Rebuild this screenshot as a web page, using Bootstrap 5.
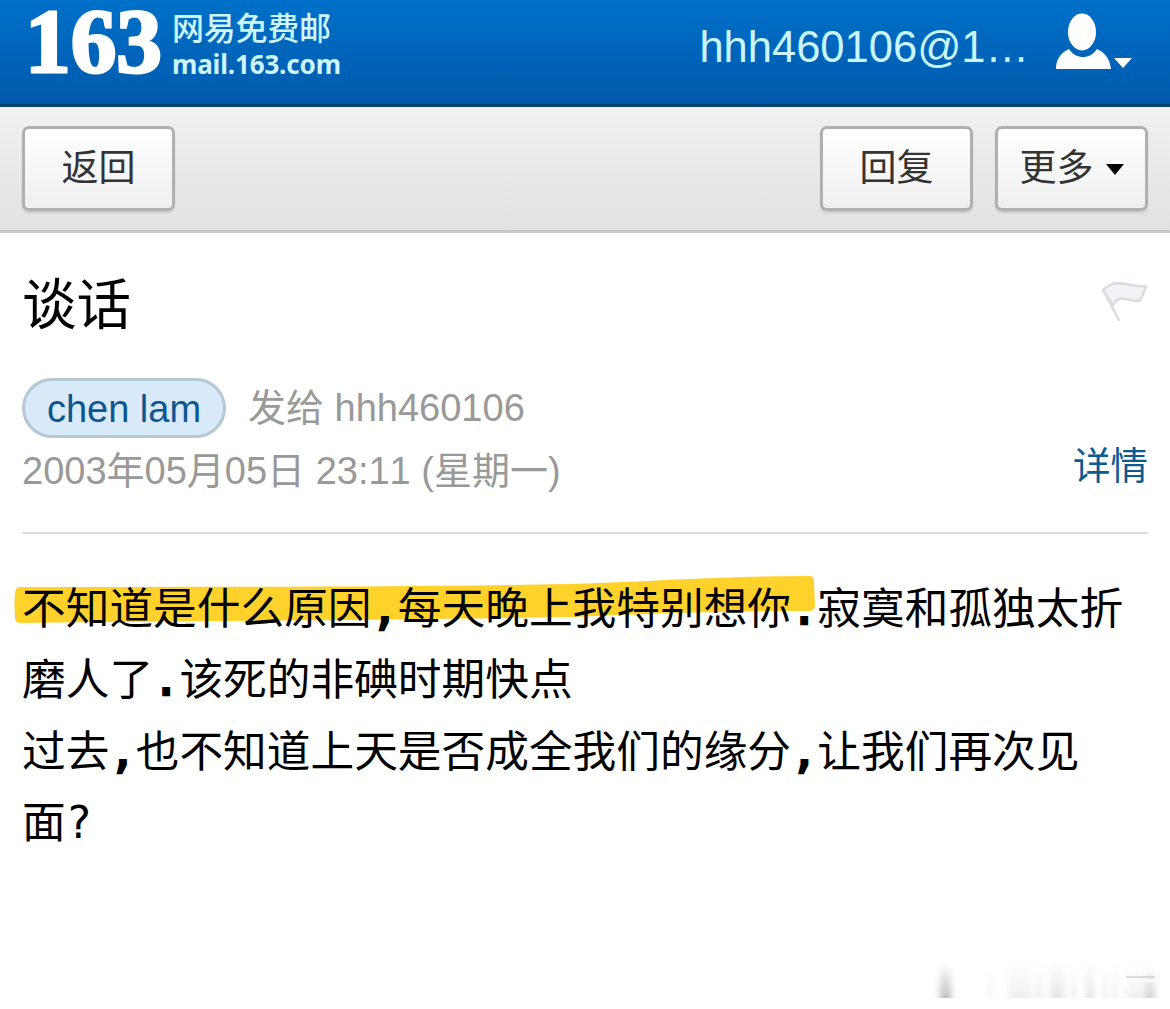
<!DOCTYPE html>
<html lang="zh-CN">
<head>
  <meta charset="UTF-8">
  <meta name="viewport" content="width=device-width, initial-scale=1">
  <title>163 网易免费邮</title>
  <link href="https://cdn.jsdelivr.net/npm/bootstrap@5.3.0/dist/css/bootstrap.min.css" rel="stylesheet">
  <style>
    body {
      font-family: "Liberation Sans", "Noto Sans CJK SC", sans-serif;
      font-kerning: none;
      height: 1009px;
      overflow: hidden;
    }

    .mail-header {
      height: 107px;
      background: linear-gradient(#0070c9, #005aac);
      border-bottom: 3px solid #0c426f;
    }

    .brand-logo {
      overflow: visible;
    }

    .account-name {
      font-size: 43.5px;
      line-height: 50px;
      color: #c9f6ff;
      margin-top: 22px;
      margin-right: 27px;
    }

    .user-icon {
      margin-top: 10px;
      margin-right: 37px;
    }

    .mail-toolbar {
      height: 126px;
      padding: 19px 22px 0;
      gap: 22px;
      background: linear-gradient(#f1f1f1, #e2e2e2);
      border-bottom: 3px solid #c9c9cb;
    }

    .btn-mail {
      --bs-btn-color: #333;
      --bs-btn-font-size: 37px;
      --bs-btn-line-height: 1;
      --bs-btn-padding-x: 0;
      --bs-btn-padding-y: 0;
      width: 153px;
      height: 85px;
      border: 3px solid #b0b0b0;
      border-radius: 7px;
      background: linear-gradient(#fff, #efefef);
      box-shadow: 0 2px 2px rgba(0, 0, 0, .12);
    }

    .more-caret {
      margin-left: 12px;
      margin-top: 2px;
    }

    .mail-main {
      padding: 0 22px;
    }

    .subject {
      font-size: 54.5px;
      line-height: 70px;
      margin: 38px 0 0;
    }

    .flag-icon {
      margin-top: 46px;
    }

    .mail-meta {
      font-size: 38px;
      line-height: 60px;
      color: #999;
      margin-top: 37px;
      height: 156px;
      border-bottom: 2px solid #ddd;
    }

    .sender {
      width: 204px;
      height: 60px;
      line-height: 56px;
      color: #0c5790;
      background: #d8eafa;
      border: 3px solid #b4c8d6;
      margin-right: 22px;
    }

    .mail-date {
      line-height: 60px;
      margin-top: 3px;
    }

    .detail-link {
      font-size: 37.5px;
      color: #0b5a92;
      margin-top: 58px;
    }

    .mail-text {
      font-family: "DejaVu Sans Mono", "Noto Sans CJK SC", monospace;
      font-size: 43.7px;
      line-height: 71.3px;
      color: #000;
      margin-top: 39px;
    }

    .punct {
      -webkit-text-stroke: 2.5px #000;
    }

    .marker-stroke {
      left: -10px;
      top: 0;
      z-index: -1;
    }

    .foot-smudge {
      margin-right: 8px;
      margin-bottom: 6px;
    }
  </style>
</head>
<body class="bg-white d-flex flex-column">

  <!-- Header -->
  <header class="mail-header d-flex justify-content-between align-items-start flex-shrink-0">
    <svg class="brand-logo" width="370" height="104" viewBox="0 0 370 104" fill="#fff">
      <text x="25" y="72" font-family="Liberation Serif" font-weight="700" font-size="92" textLength="137" lengthAdjust="spacingAndGlyphs" stroke="#fff" stroke-width="3">163</text>
      <text x="172" y="40" font-family="Noto Sans CJK SC" font-weight="500" font-size="32" textLength="159" fill="#cdf5ff">网易免费邮</text>
      <text x="172" y="73.500" font-family="Noto Sans" font-weight="700" font-size="26" textLength="169" fill="#cdf5ff">mail.163.com</text>
    </svg>
    <div class="d-flex align-items-start">
      <span class="account-name">hhh460106@1…</span>
      <svg class="user-icon" width="77" height="64" viewBox="0 0 77 64">
        <path fill="#fff" d="M0 59C0 50 4 43 13 39C17 45 22 47 27 47C32 47 37 45 41 39C50 43 54 50 55 59Z"/>
        <ellipse cx="26" cy="22" rx="14" ry="18.500" fill="#fff"/>
        <path fill="#fff" d="M58 48H76L67 58Z"/>
      </svg>
    </div>
  </header>

  <!-- Toolbar -->
  <nav class="mail-toolbar d-flex align-items-start flex-shrink-0">
    <button type="button" class="btn btn-mail">返回</button>
    <button type="button" class="btn btn-mail ms-auto">回复</button>
    <button type="button" class="btn btn-mail d-flex align-items-center justify-content-center" id="moreBtn">
      更多
      <svg class="more-caret" width="18" height="12" viewBox="0 0 18 12"><path d="M0 0H18L9 11Z"/></svg>
    </button>
  </nav>

  <!-- Message -->
  <main class="mail-main">
    <div class="d-flex justify-content-between align-items-start">
      <h1 class="subject fw-normal text-black">谈话</h1>
      <svg class="flag-icon" width="48" height="46" viewBox="0 0 48 46" fill="#f1f3f6" stroke="#dadcdf" stroke-width="2.500" stroke-linejoin="round" stroke-linecap="round">
        <path d="M3 11C18 -3 26 9 46 7C44 13 43 18 39 22C29 23 20 14 13 26Z"/>
        <path d="M3 11L19 41" fill="none"/>
      </svg>
    </div>

    <div class="mail-meta d-flex justify-content-between align-items-start">
      <div>
        <div class="d-flex">
          <span class="sender rounded-pill text-center">chen lam</span>
          <span>发给 hhh460106</span>
        </div>
        <div class="mail-date">2003年05月05日 23:11 (星期一)</div>
      </div>
      <a href="#" class="detail-link text-decoration-none">详情</a>
    </div>

    <div class="mail-text position-relative z-0">
      <!-- Hand drawn marker behind the first sentence -->
      <svg class="marker-stroke position-absolute" width="806" height="60" viewBox="0 0 806 60">
        <path fill="#ffd22b" d="M8 14C200 14 390 14 560 11C650 8 720 3 797 3Q802 3 802 8L803 33Q803 38 797 38C720 38 650 40 560 44C390 47 200 48 9 50Q3 50 3 45Q2 28 3 19Q4 14 8 14Z"/>
      </svg>
      不知道是什么原因<span class="punct">,</span>每天晚上我特别想你<span class="punct">.</span>寂寞和孤独太折<br>磨人了<span class="punct">.</span>该死的非碘时期快点<br>过去<span class="punct">,</span>也不知道上天是否成全我们的缘分<span class="punct">,</span>让我们再次见<br>面?
    </div>
  </main>

  <!-- Faded strip in the corner -->
  <svg class="foot-smudge mt-auto ms-auto flex-shrink-0" width="232" height="46" viewBox="0 0 232 46">
    <defs>
      <linearGradient id="fade" x1="0" y1="0" x2="0" y2="1">
        <stop offset="0" stop-color="#999" stop-opacity="0"/>
        <stop offset="1" stop-color="#999"/>
      </linearGradient>
      <filter id="soft" x="-10%" y="-10%" width="120%" height="120%"><feGaussianBlur stdDeviation="3 0.300"/></filter>
    </defs>
    <g fill="url(#fade)" filter="url(#soft)">
      <rect x="10" y="6" width="11" height="35" opacity=".65"/>
      <rect x="57" y="12" width="6" height="29" opacity=".1"/>
      <rect x="78" y="8" width="24" height="33" opacity=".15"/>
      <rect x="105" y="8" width="8" height="33" opacity=".14"/>
      <rect x="120" y="6" width="14" height="35" opacity=".26"/>
      <rect x="140" y="8" width="6" height="33" opacity=".15"/>
      <rect x="156" y="6" width="8" height="35" opacity=".28"/>
      <rect x="172" y="8" width="5" height="33" opacity=".15"/>
      <rect x="182" y="8" width="6" height="33" opacity=".15"/>
      <rect x="196" y="8" width="25" height="33" opacity=".14"/>
      <rect x="216" y="10" width="9" height="31" opacity=".4"/>
    </g>
    <path d="M196 19H225V21H196Z" fill="#bbb" opacity=".5"/>
    <path d="M210 14H228V16H210ZM180 23H229V25H180Z" fill="#fff" opacity=".8"/>
  </svg>

  <script src="https://cdn.jsdelivr.net/npm/bootstrap@5.3.0/dist/js/bootstrap.bundle.min.js"></script>
</body>
</html>
